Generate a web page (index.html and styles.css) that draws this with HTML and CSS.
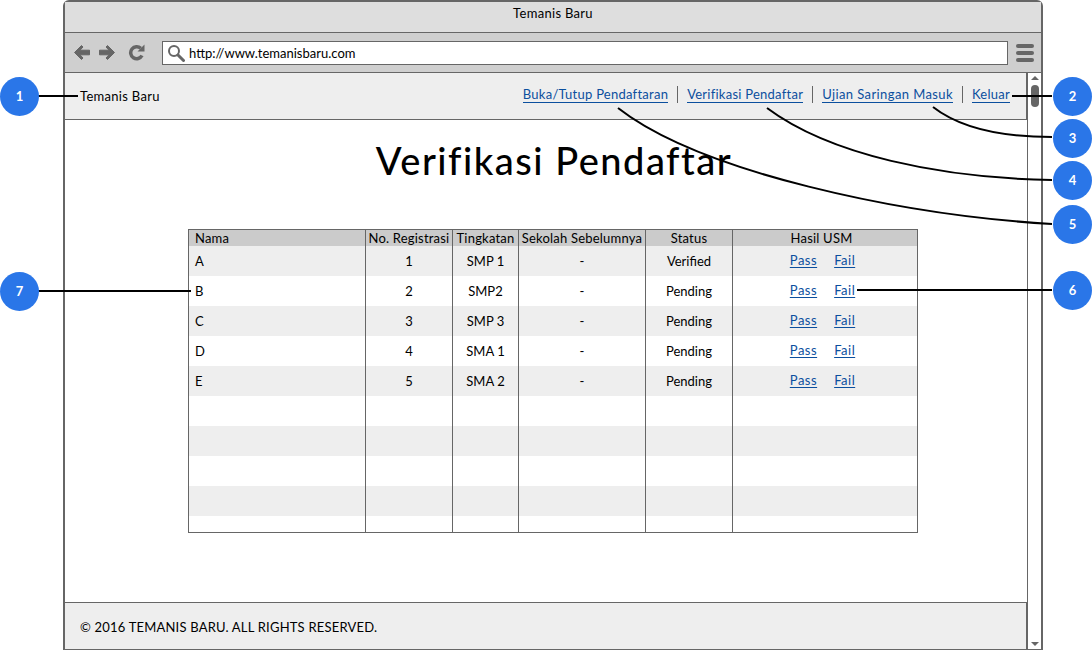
FILE: index.html
```html
<!DOCTYPE html>
<html lang="en">
<head>
  <meta charset="UTF-8">
  <title>Temanis Baru</title>
  <link rel="stylesheet" href="styles.css">
</head>
<body>
<div class="page">
  <div class="window">
    <div class="titlebar">Temanis Baru</div>

    <div class="toolbar">
      <svg class="tool-icon" width="18" height="17" viewBox="0 0 18 17"><path d="M8.500 1.500 1.500 8.500l7 7 1.500-1.500-3-3.200h9.500v-4.600H7L10 3z" fill="#666" stroke="#666" stroke-linejoin="round"/></svg>
      <svg class="tool-icon" width="18" height="17" viewBox="0 0 18 17"><path d="M9.500 1.500l7 7-7 7L8 14l3-3.200H1.500V6.200H11L8 3z" fill="#666" stroke="#666" stroke-linejoin="round"/></svg>
      <svg class="tool-icon reload" width="17" height="17" viewBox="0 0 17 17"><path d="M14 11.500A6 6 0 1 1 12.800 4.300" fill="none" stroke="#666" stroke-width="3.500"/><path d="M9.500 7.500h7v-7z" fill="#666"/></svg>
      <div class="urlbar">
        <svg width="18" height="18" viewBox="0 0 18 18"><circle cx="7" cy="7" r="5" fill="none" stroke="#666" stroke-width="2"/><path d="M11 11l5.500 5.500" stroke="#666" stroke-width="3" stroke-linecap="round"/></svg>
        <span>http://www.temanisbaru.com</span>
      </div>
      <div class="menu-icon"><i></i><i></i><i></i></div>
    </div>

    <div class="view">
      <div class="content">
        <div class="topnav">
          <span class="brand">Temanis Baru</span>
          <nav class="links">
            <a href="#">Buka/Tutup Pendaftaran</a>
            <a href="#">Verifikasi Pendaftar</a>
            <a href="#">Ujian Saringan Masuk</a>
            <a href="#">Keluar</a>
          </nav>
        </div>

        <main class="main">
          <h1>Verifikasi Pendaftar</h1>
          <table class="grid">
            <colgroup>
              <col class="c-nama"><col class="c-reg"><col class="c-ting"><col class="c-sek"><col class="c-stat"><col>
            </colgroup>
            <thead>
              <tr>
                <th class="left">Nama</th><th>No. Registrasi</th><th>Tingkatan</th><th>Sekolah Sebelumnya</th><th>Status</th><th class="usm">Hasil USM</th>
              </tr>
            </thead>
            <tbody>
              <tr><td class="left">A</td><td>1</td><td>SMP 1</td><td>-</td><td>Verified</td><td class="usm"><a href="#">Pass</a><a href="#">Fail</a></td></tr>
              <tr><td class="left">B</td><td>2</td><td>SMP2</td><td>-</td><td>Pending</td><td class="usm"><a href="#">Pass</a><a href="#">Fail</a></td></tr>
              <tr><td class="left">C</td><td>3</td><td>SMP 3</td><td>-</td><td>Pending</td><td class="usm"><a href="#">Pass</a><a href="#">Fail</a></td></tr>
              <tr><td class="left">D</td><td>4</td><td>SMA 1</td><td>-</td><td>Pending</td><td class="usm"><a href="#">Pass</a><a href="#">Fail</a></td></tr>
              <tr><td class="left">E</td><td>5</td><td>SMA 2</td><td>-</td><td>Pending</td><td class="usm"><a href="#">Pass</a><a href="#">Fail</a></td></tr>
              <tr><td></td><td></td><td></td><td></td><td></td><td></td></tr>
              <tr><td></td><td></td><td></td><td></td><td></td><td></td></tr>
              <tr><td></td><td></td><td></td><td></td><td></td><td></td></tr>
              <tr><td></td><td></td><td></td><td></td><td></td><td></td></tr>
              <tr class="cut"><td></td><td></td><td></td><td></td><td></td><td></td></tr>
            </tbody>
          </table>
        </main>

        <footer class="footer">© 2016 TEMANIS BARU. ALL RIGHTS RESERVED.</footer>
      </div>

      <div class="scrollbar">
        <span class="arrow-up"></span>
        <span class="thumb"></span>
        <span class="arrow-down"></span>
      </div>
    </div>
  </div>

  <!-- callouts -->
  <svg class="callouts" width="1092" height="650" viewBox="0 0 1092 650">
    <g fill="none" stroke="#000" stroke-width="2">
      <path d="M38 96H78"/>
      <path d="M1012 96H1052"/>
      <path d="M933 107C960 128 1000 137 1052 137"/>
      <path d="M767 108C830 155 940 178 1052 180"/>
      <path d="M618 108C700 172 900 215 1052 224"/>
      <path d="M857 290H1052"/>
      <path d="M38 291H191"/>
    </g>
  </svg>
  <span class="badge b1">1</span>
  <span class="badge b2">2</span>
  <span class="badge b3">3</span>
  <span class="badge b4">4</span>
  <span class="badge b5">5</span>
  <span class="badge b6">6</span>
  <span class="badge b7">7</span>
</div>
</body>
</html>
```

FILE: styles.css
```css
* {
  box-sizing: border-box;
}
body {
  margin: 0;
  background-color: #fff;
  color: #000;
  font-family: "Lato", "Noto Sans", sans-serif;
  font-size: 13px;
}
a {
  color: #0b4f9e;
}
.page {
  position: relative;
  width: 1092px;
  height: 650px;
  overflow: hidden;
}
.window {
  display: flex;
  flex-direction: column;
  width: 980px;
  height: 650px;
  margin-left: 63px;
  border: 2px solid #666;
  border-bottom-width: 1px;
  border-radius: 6px 6px 0 0;
}
.titlebar {
  height: 31px;
  line-height: 22px;
  text-align: center;
  background-color: #dedede;
  border-bottom: 1px solid #666;
  letter-spacing: 0.3px;
}
.toolbar {
  display: flex;
  align-items: center;
  height: 40px;
  padding: 1px 7px 0 8px;
  background-color: #cfcfcf;
  border-bottom: 1px solid #666;
}
.tool-icon {
  margin-right: 7px;
  margin-bottom: 2px;
}
.reload {
  margin: 0 17px 2px 5px;
}
.urlbar {
  display: flex;
  align-items: center;
  gap: 4px;
  flex: 1;
  height: 24px;
  padding: 0 4px;
  background-color: #fff;
  border: 1px solid #666;
}
.menu-icon {
  display: flex;
  flex-direction: column;
  gap: 3px;
  width: 18px;
  margin-left: 8px;
}
.menu-icon i {
  height: 4px;
  background-color: #666;
  border-radius: 2px;
}
.view {
  display: flex;
  flex: 1;
  min-height: 0;
}
.content {
  display: flex;
  flex-direction: column;
  flex: 1;
  min-width: 0;
}
.topnav {
  display: flex;
  justify-content: space-between;
  align-items: center;
  height: 47px;
  padding: 0 16px 0 15px;
  background-color: #eee;
  border-bottom: 1px solid #666;
  border-right: 1px solid #666;
}
.brand {
  letter-spacing: 0.3px;
}
.links {
  display: flex;
  align-items: center;
  margin-top: -3px;
}
.links a {
  padding: 0 9px;
  line-height: 17px;
  letter-spacing: 0.25px;
  text-decoration: none;
  background: linear-gradient(#0b4f9e, #0b4f9e) no-repeat 9px 100% / calc(100% - 18px) 1px;
  border-left: 1px solid #666;
}
.links a:first-child {
  border-left: 0;
}
.links a:nth-child(3) {
  letter-spacing: 0.4px;
}
.links a:last-child {
  padding-right: 0;
  background-size: calc(100% - 9px) 1px;
}
.main {
  flex: 1;
  padding-left: 123px;
}
h1 {
  width: 730px;
  height: 109px;
  margin: 0;
  padding: 16px 0 0 2px;
  text-align: center;
  font-size: 38px;
  font-weight: 500;
  line-height: 48px;
  letter-spacing: 1.5px;
}
.grid {
  width: 730px;
  height: 304px;
  table-layout: fixed;
  border-collapse: collapse;
  border: 1px solid #666;
}
.c-nama { width: 177px; }
.c-reg { width: 87px; }
.c-ting { width: 66px; }
.c-sek { width: 127px; }
.c-stat { width: 87px; }
.grid th {
  height: 16px;
  padding: 0;
  font-weight: 400;
  line-height: 16px;
  letter-spacing: 0.2px;
  white-space: nowrap;
  background-color: #cbcbcb;
  border-left: 1px solid #666;
}
.grid td {
  height: 30px;
  padding: 0;
  text-align: center;
  border-left: 1px solid #666;
}
.grid tbody tr:nth-child(odd) {
  background-color: #eee;
}
.grid .cut td {
  height: 16px;
}
.grid .left {
  padding-left: 6px;
  text-align: left;
}
.grid .usm {
  padding-right: 5px;
}
.grid th.usm {
  padding-right: 7px;
}
.usm a {
  position: relative;
  top: -1px;
  margin: 0 8.500px;
  letter-spacing: 0.5px;
  text-underline-offset: 2px;
  text-decoration-thickness: 1px;
}
.footer {
  height: 47px;
  padding-left: 15px;
  line-height: 48px;
  background-color: #eee;
  border-top: 1px solid #666;
  border-right: 1px solid #666;
  letter-spacing: 0.2px;
}
.scrollbar {
  position: relative;
  width: 14px;
  border-left: 1px solid #666;
}
.thumb {
  position: absolute;
  top: 12px;
  left: 3px;
  width: 8px;
  height: 22px;
  background-color: #666;
  border-radius: 4px;
}
.arrow-up,
.arrow-down {
  position: absolute;
  left: 3px;
  border-left: 4px solid transparent;
  border-right: 4px solid transparent;
}
.arrow-up {
  top: 3px;
  border-bottom: 4px solid #666;
}
.arrow-down {
  bottom: 3px;
  border-top: 4px solid #666;
}
.callouts {
  position: absolute;
  top: 0;
  left: 0;
}
.badge {
  position: absolute;
  width: 39px;
  height: 39px;
  line-height: 39px;
  text-align: center;
  color: #fff;
  font-weight: 700;
  background-color: #2a76e8;
  border-radius: 50%;
}
.b1 { left: 0; top: 77px; }
.b2 { left: 1053px; top: 77px; }
.b3 { left: 1053px; top: 119px; }
.b4 { left: 1053px; top: 161px; }
.b5 { left: 1053px; top: 205px; }
.b6 { left: 1053px; top: 271px; }
.b7 { left: 0; top: 272px; }
```
